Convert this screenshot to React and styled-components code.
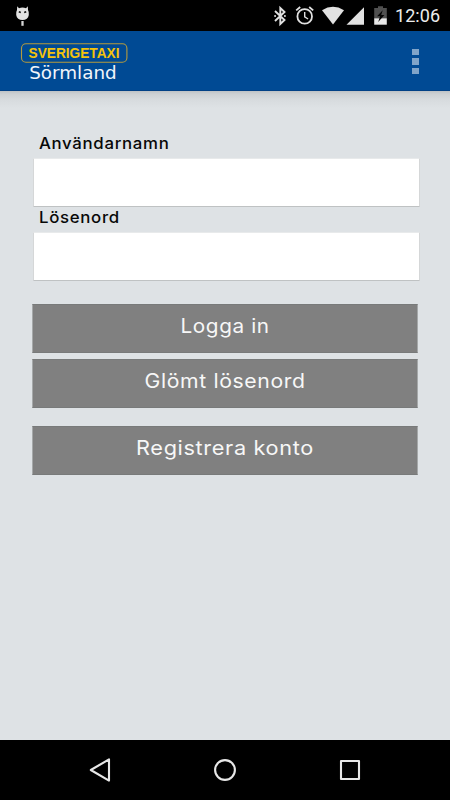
import React from "react";
import styled, { createGlobalStyle } from "styled-components";

const GlobalStyle = createGlobalStyle`
  * { box-sizing: border-box; }
  body { margin: 0; background: #dee2e5; }
`;

const Screen = styled.div`
  display: flex;
  flex-direction: column;
  width: 450px;
  height: 800px;
  overflow: hidden;
  background: #dee2e5;
  font-family: Inter, sans-serif;
`;

const StatusBar = styled.div`
  display: flex;
  justify-content: space-between;
  flex: 0 0 31px;
  background: #000;
`;

const StatusIcons = styled.div`
  display: flex;
`;

const Clock = styled.span`
  width: 55px;
  padding-top: 5px;
  font: 400 18px/22px Roboto, sans-serif;
  letter-spacing: 0.05px;
  color: #ececec;
  white-space: nowrap;
`;

const Header = styled.header`
  display: flex;
  justify-content: space-between;
  flex: 0 0 60px;
  background: #004a94;
  border-bottom: 1px solid #004085;
`;

const MenuButton = styled.button`
  display: flex;
  flex-direction: column;
  gap: 3px;
  padding: 18px 31px 0 12px;
  border: 0;
  background: none;
`;

const MenuDot = styled.span`
  width: 7px;
  height: 6.4px;
  background: #80a4c9;
`;

const Form = styled.form`
  flex: 1;
  display: flex;
  flex-direction: column;
  padding: 41px 31px 0 33px;
  background: linear-gradient(#bec2c5 0, #ccd0d3 3px, #d7dbde 9px, #dee2e5 17px);
`;

const Field = styled.label`
  display: flex;
  flex-direction: column;
  height: 74px;
`;

const FieldLabel = styled.span`
  flex: 0 0 26px;
  margin-left: 6px;
  font-size: 16px;
  font-weight: 500;
  line-height: 22px;
  letter-spacing: 0.65px;
  color: #080808;
  transform: scaleX(1.05);
  transform-origin: left;
`;

const Input = styled.input`
  width: 387px;
  height: 49px;
  flex: none;
  padding: 0 10px;
  border: 1px solid #d5d7d8;
  border-top-color: #e8eaeb;
  border-bottom-color: #bfc2c3;
  border-radius: 1px;
  background: #fff;
  font: 16px Inter, sans-serif;
  outline: none;
`;

const Actions = styled.div`
  display: flex;
  flex-direction: column;
  width: 386px;
  margin-left: -1px;
  padding-top: 24px;
`;

const Button = styled.button`
  height: 49px;
  margin: 0 0 ${(p) => p.$gap || "0"};
  padding: 0 0 5px;
  border: 1px solid #787a7a;
  border-left-color: #a5a8a9;
  border-right-color: #a5a8a9;
  background: #808080;
  color: #f7f7f7;
  font: 400 20px/24px Inter, sans-serif;
  letter-spacing: 0.6px;
`;

const ButtonLabel = styled.span`
  display: inline-block;
  transform: scaleX(${(p) => p.$stretch});
`;

const NavBar = styled.nav`
  display: flex;
  justify-content: space-between;
  flex: 0 0 60px;
  padding: 15px 85px;
  background: #000;
`;

function Notification() {
  return (
    <svg width="40" height="31" viewBox="0 0 40 31">
      <path d="M17.2 6.2 19 8.2Q22.5 6.9 26 8.2L27.8 6.2 28 10Q29.2 12 28.8 15C28.3 18.4 26 20 22.5 20S16.7 18.4 16.2 15Q15.8 12 17 10Z" fill="#e2e2e2" />
      <path d="m18.8 11.8 2 .7M26.2 11.8l-2 .7" stroke="#111" strokeWidth="1.5" />
      <path d="M22.5 21v4.8" stroke="#d5d5d5" strokeWidth="2.3" />
    </svg>
  );
}

function SystemIcons() {
  return (
    <svg width="125" height="31" viewBox="270 0 125 31">
      <path d="m275 11 9.5 9-4.2 4V8l4.2 4-9.5 9" fill="none" stroke="#e2e2e2" strokeWidth="1.9" />
      <path d="M274.2 14.9h1.8v2h-1.8zm9.8 0h1.8v2H284z" fill="#bbb" />
      <g fill="none" stroke="#e2e2e2">
        <circle cx="304.7" cy="16.4" r="7.3" strokeWidth="1.8" />
        <path d="M304.7 12v4.8l3.4 2.2" strokeWidth="1.4" />
        <path d="m296.2 10.4 4-3.4m9 0 4 3.4" strokeWidth="1.8" />
      </g>
      <path d="M322 10.2Q333 3.4 344 10.2L333 24.5Z" fill="#e2e2e2" />
      <path d="M364 7.3v17.4h-17.5Z" fill="#e2e2e2" />
      <path d="M378 6.3h5V8h3.8v10.5h-12.6V8h3.8z" fill="#505050" />
      <path d="M374.2 18.3h12.6v6.4h-12.6z" fill="#e8e8e8" />
      <path d="m382.7 10.2-5.6 6.1h3l-1.9 5.8 6.2-7.2h-3.2z" fill="#050505" />
    </svg>
  );
}

function Logo() {
  return (
    <svg width="150" height="59" viewBox="0 31 150 59" role="img" aria-label="Sverigetaxi Sörmland">
      <rect x="21.5" y="43.7" width="105.4" height="18.6" rx="4.5" fill="none" stroke="#b49b3e" strokeWidth="1.1" />
      <text x="28.5" y="58.4" textLength="91" lengthAdjust="spacingAndGlyphs" fill="#f5c30b" fontFamily="Liberation Sans, sans-serif" fontWeight="700" fontSize="15">SVERIGETAXI</text>
      <text x="29.2" y="78.6" textLength="87.5" lengthAdjust="spacingAndGlyphs" fill="#f1f5fa" fontFamily="DejaVu Sans, sans-serif" fontSize="18">Sörmland</text>
    </svg>
  );
}

function NavIcon({ children }) {
  return (
    <svg width="30" height="30" viewBox="0 0 30 30" fill="none" stroke="#e7e7e7" strokeWidth="2.1" strokeLinejoin="round">
      {children}
    </svg>
  );
}

export default function App() {
  return (
    <Screen>
      <GlobalStyle />
      <StatusBar>
        <Notification />
        <StatusIcons>
          <SystemIcons />
          <Clock>12:06</Clock>
        </StatusIcons>
      </StatusBar>
      <Header>
        <Logo />
        <MenuButton type="button" aria-label="Meny">
          <MenuDot />
          <MenuDot />
          <MenuDot />
        </MenuButton>
      </Header>
      <Form>
        <Field>
          <FieldLabel>Användarnamn</FieldLabel>
          <Input type="text" />
        </Field>
        <Field>
          <FieldLabel>Lösenord</FieldLabel>
          <Input type="password" />
        </Field>
        <Actions>
          <Button type="button" $gap="6px"><ButtonLabel $stretch={1.035}>Logga in</ButtonLabel></Button>
          <Button type="button" $gap="18px"><ButtonLabel $stretch={1.06}>Glömt lösenord</ButtonLabel></Button>
          <Button type="button"><ButtonLabel $stretch={1.085}>Registrera konto</ButtonLabel></Button>
        </Actions>
      </Form>
      <NavBar>
        <NavIcon><path d="M24 4.4v21.2L5.8 15Z" /></NavIcon>
        <NavIcon><circle cx="15" cy="15" r="9.9" /></NavIcon>
        <NavIcon><rect x="6" y="6" width="18" height="18" /></NavIcon>
      </NavBar>
    </Screen>
  );
}
